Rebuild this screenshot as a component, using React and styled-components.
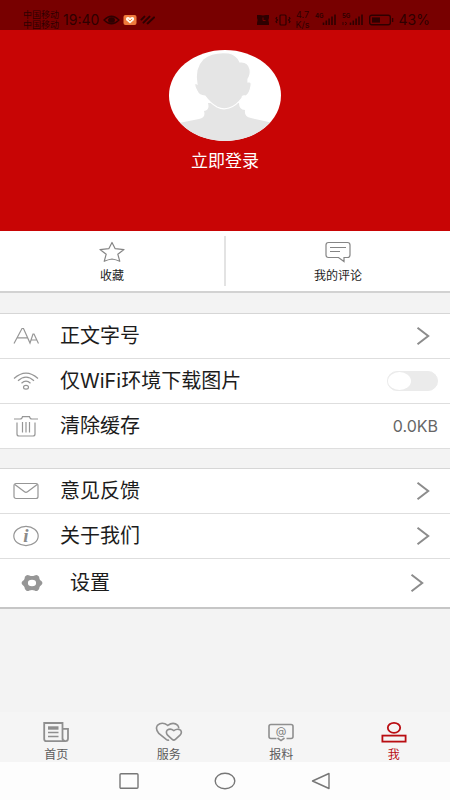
import React, { useState } from 'react';
import styled, { createGlobalStyle } from 'styled-components';

const GlobalStyle = createGlobalStyle`
  * {
    box-sizing: border-box;
  }
  body {
    margin: 0;
    background: #f3f3f3;
    color: #1c1c1c;
    font-family: Inter, 'Noto Sans CJK SC', sans-serif;
  }
  button {
    border: none;
    padding: 0;
    background: none;
    color: inherit;
    font: inherit;
    cursor: pointer;
  }
  a {
    color: inherit;
    text-decoration: none;
  }
  svg {
    display: block;
    flex-shrink: 0;
  }
`;

const line = { fill: 'none', stroke: '#969696', strokeWidth: 1.2 };

const StarIcon = () => (
  <svg width="26" height="22" viewBox="0 0 26 22" {...line} stroke="#858585" strokeLinejoin="round">
    <path d="M13 1.5 L16.2 7.7 L25 8.6 L18.8 13.2 L20.8 20.3 Q17 18.6 13 18 Q9 18.6 5.2 20.3 L7.2 13.2 L1 8.6 L9.8 7.7 Z" />
  </svg>
);

const CommentIcon = () => (
  <svg width="26" height="22" viewBox="0 0 26 22" {...line} stroke="#858585">
    <path d="M3.5 1.5 H22.5 Q25 1.5 25 4 V14 Q25 16.5 22.5 16.5 H19 V20.5 L13.5 16.5 H3.5 Q1 16.5 1 14 V4 Q1 1.5 3.5 1.5 Z" />
    <path d="M5 6.5 H21 M5 10.5 H15" />
  </svg>
);

const FontIcon = () => (
  <svg width="26" height="22" viewBox="0 0 26 22" {...line}>
    <path d="M1 18.5 L9 3.5 H10.5 L17 18 L20 9 H21 L25.5 18.5 M4.5 12.8 H14.5 M18.5 15 H24" />
  </svg>
);

const WifiIcon = () => (
  <svg width="26" height="22" viewBox="0 0 26 22" {...line}>
    <path d="M1 8.5 Q13 -2.2 25 8.5 M5 10.8 Q13 3.6 21 10.8 M8.5 13.2 Q13 9 17.5 13.2" />
    <ellipse cx="13" cy="17.3" rx="2.5" ry="1.9" />
  </svg>
);

const TrashIcon = () => (
  <svg width="26" height="22" viewBox="0 0 26 22" {...line}>
    <path d="M1 4 H7 Q9 4 9.5 1.6 H16.5 Q17 4 19 4 H25 M4 7.5 V19 Q4 21 6 21 H20 Q22 21 22 19 V7.5 M9.5 7 V17.5 M13 7 V17.5 M16.5 7 V17.5" />
  </svg>
);

const MailIcon = () => (
  <svg width="26" height="22" viewBox="0 0 26 22" {...line}>
    <rect x="1" y="3.5" width="24" height="15" rx="2" />
    <path d="M1.8 4.5 L11.5 11.8 Q13 13 14.5 11.8 L24.2 4.5" />
  </svg>
);

const InfoIcon = () => (
  <svg width="26" height="22" viewBox="0 0 26 22" {...line}>
    <ellipse cx="13" cy="11" rx="12.2" ry="9.6" />
    <text
      x="13"
      y="16.8"
      textAnchor="middle"
      fill="#8a8a8a"
      stroke="none"
      fontFamily="Liberation Serif, serif"
      fontStyle="italic"
      fontWeight="700"
      fontSize="19"
    >
      i
    </text>
  </svg>
);

const GearIcon = () => (
  <svg width="26" height="22" viewBox="0 0 26 22">
    <path
      fillRule="evenodd"
      fill="#969696"
      d="M7.2 3.6 Q8.6 2.6 10.4 3.6 Q13 4.6 15.6 3.6 Q17.4 2.6 18.8 3.6 Q20.6 4.6 20.4 6.4 Q20.6 8 22.4 9 Q23.4 10 23.4 11 Q23.4 12 22.4 13 Q20.6 14 20.4 15.6 Q20.6 17.4 18.8 18.4 Q17.4 19.4 15.6 18.4 Q13 17.4 10.4 18.4 Q8.6 19.4 7.2 18.4 Q5.4 17.4 5.6 15.6 Q5.4 14 3.6 13 Q2.6 12 2.6 11 Q2.6 10 3.6 9 Q5.4 8 5.6 6.4 Q5.4 4.6 7.2 3.6 Z M13 7.8 A4.1 3.2 0 1 0 13 14.2 A4.1 3.2 0 1 0 13 7.8 Z"
    />
  </svg>
);

const HomeIcon = () => (
  <svg width="26" height="24" viewBox="0 0 26 24" fill="none" stroke="#8f8f8f" strokeWidth="1.8">
    <path d="M19.5 19.5 V3 H1.2 V19 Q1.2 21.2 3.4 21.2 H22.5 Q25 21.2 25 18.5 V8.8 H19.8 M19.5 18 Q19.5 21 22 21" />
    <path d="M5 8 H15.5" strokeWidth="3.4" />
    <path d="M5 12.4 H15.5 M5 16.5 H15.5" strokeWidth="1.5" />
  </svg>
);

const ServiceIcon = () => (
  <svg width="28" height="24" viewBox="0 0 28 24" fill="none" stroke="#8f8f8f" strokeWidth="1.6">
    <path d="M14 19.8 Q12.8 20.6 11.5 19.6 L3.8 13.4 Q0 9 2.4 5.4 Q7 1.2 12.8 5.4 Q18.4 1.2 22.8 5.4 Q23.8 6.6 23.8 8.6" />
    <path d="M17.2 19.4 L12.6 15.2 Q10.4 12.4 12.2 10.2 Q15.4 8 18.8 10.6 Q22.2 8 25.6 10.2 Q27.4 12.4 25 15.2 L20.4 19.4 Q18.8 20.8 17.2 19.4 Z" />
  </svg>
);

const ReportIcon = () => (
  <svg width="26" height="24" viewBox="0 0 26 24" fill="none" stroke="#8f8f8f" strokeWidth="1.6">
    <path d="M8.5 18.5 H3 Q1 18.5 1 16.5 V6.5 Q1 4.5 3 4.5 H23 Q25 4.5 25 6.5 V16.5 Q25 18.5 23 18.5 H18.5 M9.5 18 L13 20.6 L16.5 18" />
    <text x="13" y="14.6" textAnchor="middle" fill="#808080" stroke="none" fontSize="11">
      @
    </text>
  </svg>
);

const MeIcon = () => (
  <svg width="26" height="24" viewBox="0 0 26 24" fill="none" stroke="#b90d12" strokeWidth="1.8">
    <ellipse cx="13" cy="7.8" rx="6.2" ry="5" />
    <rect x="1.4" y="15.6" width="23.2" height="6" />
  </svg>
);

const Chevron = () => (
  <ChevronSvg width="14" height="18" viewBox="0 0 14 18" fill="none" stroke="#8c8c8c" strokeWidth="2">
    <path d="M1.5 0.8 L12.2 9 L1.5 17.2" />
  </ChevronSvg>
);

const Avatar = () => (
  <svg width="112" height="91" viewBox="0 0 112 91">
    <clipPath id="avatar-clip">
      <ellipse cx="56" cy="45.5" rx="56" ry="45.5" />
    </clipPath>
    <g clipPath="url(#avatar-clip)">
      <rect width="112" height="91" fill="#fff" />
      <path
        fill="#e5e5e5"
        d="M39 53 Q41 60 35 61 Q37 68 30 69 L10 73 V91 H104 V73 L82 68 Q75 67 76 60 Q70 60 70 53 Z"
      />
      <path
        fill="#e5e5e5"
        stroke="#fff"
        strokeWidth="1.2"
        d="M28 34 Q25 18 34 9 Q44 1 60 3 Q68 5 71 12 Q79 11 81 19 Q82 25 79 29 L79 32 Q83 31 82 36 Q81 43 77 46 Q73 45 73 48 Q67 56 60 58 Q54 60 48 57 Q41 53 36 46 Q30 46 28 41 Q25 36 26 33 Z"
      />
    </g>
  </svg>
);

const SignalIcon = ({ label }) => (
  <svg width="22" height="14" viewBox="0 0 22 14">
    <text x="0" y="5" fontSize="6" fontWeight="700" fill="#2e0000">{label}</text>
    <path d="M8.5 12 V9.5 M11.3 12 V7.5 M14.1 12 V5.5 M17 12 V3.5 M20 12 V1.5" stroke="#2e0000" strokeWidth="1.6" />
    {label === '5G' && <path d="M1 9 V12 M3 9 L5 10.5 L3 12" fill="none" stroke="#2e0000" strokeWidth="0.9" />}
  </svg>
);

const StatusIconsLeft = () => (
  <svg width="52" height="14" viewBox="0 0 52 14" fill="none" stroke="#2e0000" strokeWidth="1.3">
    <path d="M1 7 Q8.5 -0.5 16 7 Q8.5 14.5 1 7 Z" />
    <ellipse cx="8.5" cy="7" rx="2.8" ry="2.2" fill="#2e0000" />
    <rect x="20.5" y="2" width="13" height="10" rx="2" fill="#ef7a3c" stroke="none" />
    <path d="M27 10.5 L23 7 Q22.6 4 25 4 Q26.4 4 27 5 Q28 4 29.4 4 Q31.6 4.4 31 7 Z" fill="#fff6e8" stroke="none" />
    <path d="M25.5 6.5 L27 8 L29 6" stroke="#ef7a3c" strokeWidth="0.9" />
    <path d="M38.4 6.6 L41.4 3.6 M40.5 9.6 L46.5 3.6 M44.6 10.4 L51 4.4" strokeWidth="2" strokeLinecap="round" />
  </svg>
);

const AlarmIcon = () => (
  <svg width="14" height="12" viewBox="0 0 14 12">
    <path d="M1 1 H4 L7 1.6 L10 1 H13 V4 L12.4 6 L13 9 V11 H1 V9 L1.6 6 L1 4 Z" fill="#2e0000" />
    <path d="M7 3.5 V6.5 H9.5" fill="none" stroke="#780000" />
  </svg>
);

const VibrateIcon = () => (
  <svg width="16" height="12" viewBox="0 0 16 12" fill="none" stroke="#2e0000" strokeWidth="1.2">
    <rect x="5" y="1" width="6" height="10" rx="1" />
    <path d="M2 3 L1 4.5 L2.5 6 L1 7.5 L2 9 M14 3 L15 4.5 L13.5 6 L15 7.5 L14 9" />
  </svg>
);

const BatteryIcon = () => (
  <svg width="25" height="12" viewBox="0 0 25 12" fill="none" stroke="#2e0000" strokeWidth="1.4">
    <rect x="0.7" y="1.2" width="20.6" height="9.6" rx="2" />
    <rect x="3" y="3.4" width="8" height="5.2" fill="#2e0000" stroke="none" />
    <path d="M23.6 4 V8" />
  </svg>
);

const tabs = [
  { label: '首页', Icon: HomeIcon },
  { label: '服务', Icon: ServiceIcon },
  { label: '报料', Icon: ReportIcon },
  { label: '我', Icon: MeIcon, active: true },
];

const App = () => {
  const [wifiOnly, setWifiOnly] = useState(false);

  return (
    <>
      <GlobalStyle />
      <Page>
        <StatusBar>
          <StatusGroup>
            <SmallLines>中国移动<br />中国移动</SmallLines>
            <StatusText>19:40</StatusText>
            <StatusIconsLeft />
          </StatusGroup>
          <StatusGroup $wide>
            <AlarmIcon />
            <VibrateIcon />
            <SmallLines>4.7<br />K/s</SmallLines>
            <SignalIcon label="4G" />
            <SignalIcon label="5G" />
            <BatteryIcon />
            <StatusText>43%</StatusText>
          </StatusGroup>
        </StatusBar>

        <Profile>
          <LoginButton>
            <Avatar />
            立即登录
          </LoginButton>
        </Profile>

        <Actions>
          <Action>
            <StarIcon />
            收藏
          </Action>
          <Divider />
          <Action>
            <CommentIcon />
            我的评论
          </Action>
        </Actions>

        <Sections>
          <Section>
            <Row as="button">
              <FontIcon />
              <RowLabel>正文字号</RowLabel>
              <Chevron />
            </Row>
            <Row as="label">
              <WifiIcon />
              <RowLabel>仅WiFi环境下载图片</RowLabel>
              <Switch type="checkbox" checked={wifiOnly} onChange={(e) => setWifiOnly(e.target.checked)} />
            </Row>
            <Row as="button">
              <TrashIcon />
              <RowLabel>清除缓存</RowLabel>
              <RowValue>0.0KB</RowValue>
            </Row>
          </Section>

          <Section>
            <Row as="button">
              <MailIcon />
              <RowLabel>意见反馈</RowLabel>
              <Chevron />
            </Row>
            <Row as="button">
              <InfoIcon />
              <RowLabel>关于我们</RowLabel>
              <Chevron />
            </Row>
            <Row as="button" $inset>
              <GearIcon />
              <RowLabel>设置</RowLabel>
              <Chevron />
            </Row>
          </Section>
        </Sections>

        <Bottom>
          <TabBar>
            {tabs.map(({ label, Icon, active }) => (
              <Tab key={label} href="#" $active={active}>
                <Icon />
                {label}
              </Tab>
            ))}
          </TabBar>
          <SystemBar>
            <SystemButton aria-label="Recent apps">
              <svg width="22" height="18" viewBox="0 0 22 18" fill="none" stroke="#777" strokeWidth="1.4">
                <rect x="2" y="1.7" width="18" height="14.6" rx="1" />
              </svg>
            </SystemButton>
            <SystemButton aria-label="Home">
              <svg width="22" height="18" viewBox="0 0 22 18" fill="none" stroke="#777" strokeWidth="1.4">
                <ellipse cx="11" cy="9" rx="9.8" ry="7.8" />
              </svg>
            </SystemButton>
            <SystemButton aria-label="Back">
              <svg width="22" height="18" viewBox="0 0 22 18" fill="none" stroke="#777" strokeWidth="1.4" strokeLinejoin="round">
                <path d="M19 1.5 V16.5 L2.5 9 Z" />
              </svg>
            </SystemButton>
          </SystemBar>
        </Bottom>
      </Page>
    </>
  );
};

// Styled components
const Page = styled.div`
  min-height: 100vh;
  display: flex;
  flex-direction: column;
`;

const StatusBar = styled.div`
  display: flex;
  justify-content: space-between;
  height: 30px;
  padding: 10px 20px 0 23px;
  background: #780000;
  color: #2e0000;
`;

const StatusGroup = styled.div`
  display: flex;
  align-items: center;
  gap: ${(props) => (props.$wide ? '5px' : '4px')};
`;

const SmallLines = styled.span`
  font-size: 9px;
  line-height: 10px;
  text-align: center;
`;

const StatusText = styled.span`
  font-size: 14px;
  line-height: 20px;
`;

const Profile = styled.header`
  display: flex;
  justify-content: center;
  padding: 20px 0 60px;
  background: #c80505;
`;

const LoginButton = styled.button`
  display: flex;
  flex-direction: column;
  align-items: center;
  gap: 10px;
  color: #fff;
  font-size: 17px;
  line-height: 20px;
`;

const Actions = styled.div`
  display: flex;
  background: #fff;
  border-bottom: 2px solid #d2d2d2;
`;

const Action = styled.button`
  flex: 1;
  display: flex;
  flex-direction: column;
  align-items: center;
  gap: 6px;
  padding: 10px 0 8px;
  font-size: 12px;
  line-height: 14px;
`;

const Divider = styled.div`
  width: 2px;
  margin: 5px 0;
  background: #e3e3e3;
`;

const Sections = styled.main`
  display: flex;
  flex-direction: column;
  gap: 19px;
  padding: 20px 0;
`;

const Section = styled.section`
  background: #fff;
  border-top: 1px solid #d6d6d6;
`;

const Row = styled.div`
  display: flex;
  align-items: center;
  gap: ${(props) => (props.$inset ? '25px' : '21px')};
  width: 100%;
  height: ${(props) => (props.$inset ? '50px' : '45px')};
  padding: ${(props) => (props.$inset ? '0 18px 0 19px' : '0 12px 0 13px')};
  text-align: left;

  && {
    padding: ${(props) => (props.$inset ? '0 18px 0 19px' : '0 12px 0 13px')};
    border-bottom: ${(props) => (props.$inset ? '2px solid #c6c6c6' : '1px solid #dedede')};
  }
`;

const RowLabel = styled.span`
  flex: 1;
  font-size: 20px;
  line-height: 24px;
`;

const RowValue = styled.span`
  color: #666;
  font-size: 16px;
  line-height: 24px;
`;

const ChevronSvg = styled.svg`
  margin-right: 8px;
`;

const Switch = styled.input`
  appearance: none;
  width: 51px;
  height: 20px;
  margin: 0;
  border: 1px solid #ebebeb;
  border-radius: 10px;
  background: ${(props) => (props.checked ? '#c80505' : '#ebebeb')};
  cursor: pointer;

  &::before {
    content: '';
    display: block;
    width: 23px;
    height: 18px;
    margin-left: ${(props) => (props.checked ? 'auto' : '0')};
    border-radius: 50%;
    background: #fff;
  }
`;

const Bottom = styled.footer`
  margin-top: auto;
`;

const TabBar = styled.nav`
  display: grid;
  grid-template-columns: repeat(4, 1fr);
  background: #f5f5f5;
`;

const Tab = styled.a`
  display: flex;
  flex-direction: column;
  align-items: center;
  gap: 4px;
  padding-top: 8px;
  color: ${(props) => (props.$active ? '#b90d12' : '#5c5c5c')};
  font-size: 12px;
  line-height: 14px;
`;

const SystemBar = styled.div`
  display: flex;
  justify-content: center;
  align-items: center;
  gap: 74px;
  height: 38px;
  background: #fdfdfd;
`;

const SystemButton = styled.button`
  display: block;
`;

export default App;
